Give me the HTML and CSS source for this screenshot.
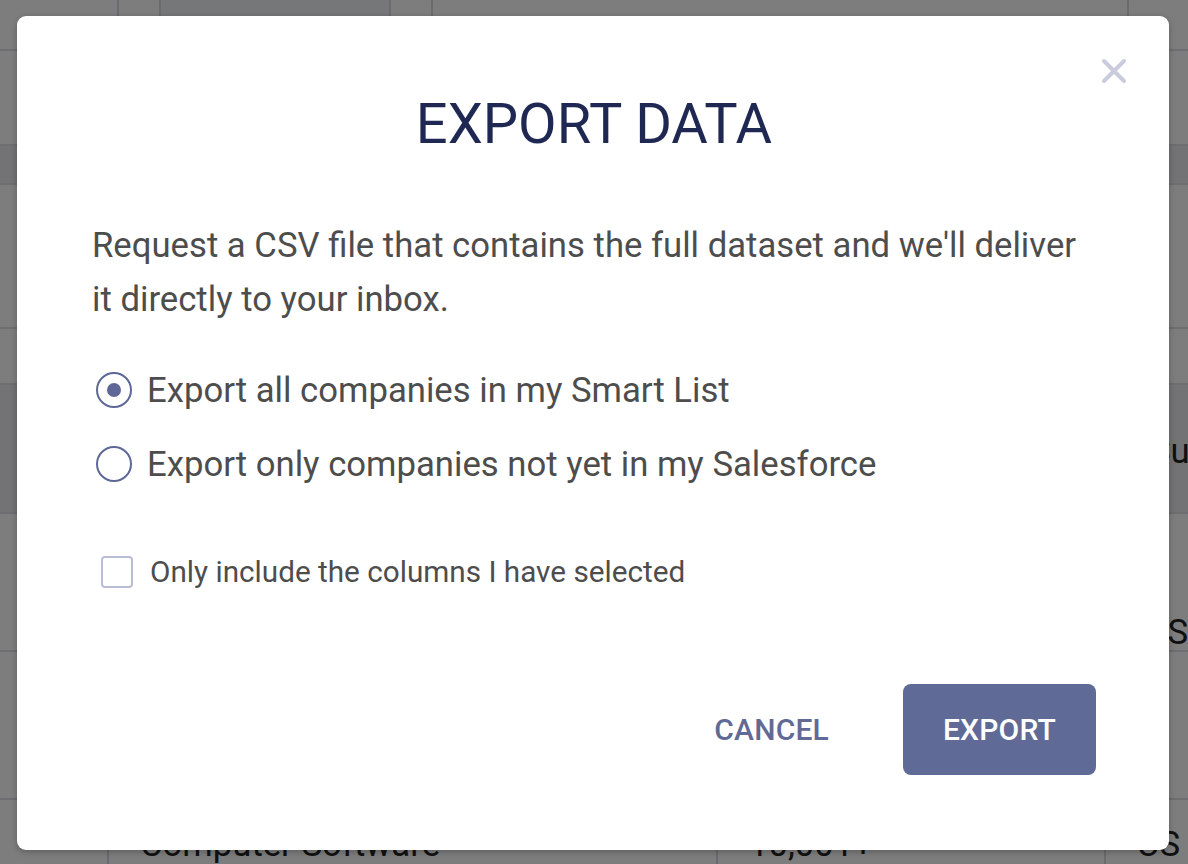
FILE: index.html
```html
<!DOCTYPE html>
<html lang="en">
<head>
<meta charset="utf-8">
<title>Export data</title>
<link rel="stylesheet" href="styles.css">
</head>
<body>
<div class="page">
  <div class="toolbar">
    <div class="tcell c1"></div>
    <div class="tcell c2"></div>
    <div class="tcell c3 dark"></div>
    <div class="tcell c4"></div>
    <div class="tcell c5"></div>
  </div>
  <div class="row r1"></div>
  <div class="row r2 shade"></div>
  <div class="row r3"></div>
  <div class="row r4"></div>
  <div class="row r5 shade"><span class="cut">Su</span></div>
  <div class="row r6"><span class="cut">US</span></div>
  <div class="row r7"></div>
  <div class="row last">
    <span class="cell a"></span>
    <span class="cell b">Computer Software</span>
    <span class="cell c">10,001+</span>
    <span class="cell d">US</span>
  </div>
</div>
<div class="overlay"></div>

<div class="modal" role="dialog">
  <button class="close" aria-label="Close">
    <svg width="26" height="26" viewBox="0 0 26 26"><path d="M3 3 L23 23 M23 3 L3 23" stroke="#c9ccdd" stroke-width="4" stroke-linecap="round"/></svg>
  </button>
  <h1 class="title">EXPORT DATA</h1>
  <p class="desc">Request a CSV file that contains the full dataset and we'll deliver it directly to your inbox.</p>
  <div class="options">
    <label class="radio"><span class="circle on"></span><span>Export all companies in my Smart List</span></label>
    <label class="radio"><span class="circle"></span><span>Export only companies not yet in my Salesforce</span></label>
  </div>
  <label class="check"><span class="box"></span><span>Only include the columns I have selected</span></label>
  <div class="actions">
    <button class="btn-cancel">CANCEL</button>
    <button class="btn-export">EXPORT</button>
  </div>
</div>
</body>
</html>
```

FILE: styles.css
```css
* { box-sizing: border-box; }
html, body { margin: 0; padding: 0; }
body {
  width: 1188px;
  height: 864px;
  overflow: hidden;
  font-family: Roboto, "Liberation Sans", Arial, sans-serif;
  background: #ffffff;
  position: relative;
}
.page {
  width: 1188px;
  height: 864px;
  display: flex;
  flex-direction: column;
  background: #fafafa;
}
.toolbar {
  height: 52px;
  display: flex;
  border-bottom: 2px solid #dcdde2;
}
.tcell { border-right: 2px solid #d6d7dc; }
.c1 { width: 119px; }
.c2 { width: 42px; }
.c3 { width: 230px; }
.c4 { width: 42px; }
.c5 { width: 696px; }
.dark { background: #eceef3; }
.row { border-bottom: 2px solid #dcdde2; position: relative; font-size: 34.7px; color: #222; }
.r1 { height: 96px; }
.r2 { height: 40px; }
.r3 { height: 145px; }
.r4 { height: 57px; }
.r5 { height: 131px; }
.r6 { height: 140px; }
.r7 { height: 150px; }
.shade { background: #e6e7ec; }
.cut { position: absolute; left: 1150px; }
.r5 .cut { top: 46px; }
.r6 .cut { top: 98px; left: 1145px; }
.last { flex: 1; display: flex; border-bottom: none; }
.cell { border-right: 2px solid #d6d7dc; padding-top: 24px; }
.cell.a { width: 109px; }
.cell.b { width: 609px; padding-left: 31px; }
.cell.c { width: 388px; padding-left: 31px; }
.cell.d { flex: 1; border-right: none; padding-left: 31px; }
.overlay {
  position: absolute;
  inset: 0;
  background: rgba(0, 0, 0, 0.5);
}
.modal {
  position: absolute;
  left: 17px;
  top: 16px;
  width: 1152px;
  height: 834px;
  background: #ffffff;
  border-radius: 9px;
  padding: 76px 73px 0 75px;
  display: flex;
  flex-direction: column;
  box-shadow: 0 2px 6px rgba(0,0,0,0.25);
}
.close {
  position: absolute;
  right: 42px;
  top: 42px;
  width: 26px;
  height: 26px;
  padding: 0;
  border: none;
  background: none;
}
.close svg { display: block; }
.title {
  margin: 0;
  text-align: center;
  font-size: 56px;
  line-height: 64px;
  font-weight: 400;
  color: #1e2852;
}
.desc {
  margin: 62px 0 0 0;
  font-size: 34.7px;
  line-height: 54px;
  color: #4d4d4d;
}
.options {
  margin-top: 41px;
  display: flex;
  flex-direction: column;
  gap: 28px;
}
.radio, .check {
  display: flex;
  align-items: center;
  color: #4d4d4d;
}
.radio { font-size: 34.7px; line-height: 46px; gap: 15px; padding-left: 4px; }
.circle {
  width: 36px;
  height: 36px;
  flex: none;
  border: 2px solid #5e6898;
  border-radius: 50%;
  display: flex;
  align-items: center;
  justify-content: center;
}
.circle.on::after {
  content: "";
  width: 14px;
  height: 14px;
  border-radius: 50%;
  background: #5e6898;
}
.check {
  margin-top: 65px;
  font-size: 29.7px;
  line-height: 40px;
  gap: 17px;
  padding-left: 9px;
}
.box {
  width: 32px;
  height: 32px;
  flex: none;
  border: 2px solid #b9bdd6;
  border-radius: 4px;
}
.actions {
  margin-top: 92px;
  display: flex;
  justify-content: flex-end;
  align-items: center;
  gap: 74px;
}
.btn-cancel {
  border: none;
  background: none;
  padding: 0;
  font-family: inherit;
  font-size: 30px;
  font-weight: 500;
  color: #5f6a96;
  letter-spacing: 0.2px;
}
.btn-export {
  width: 193px;
  height: 91px;
  border: none;
  border-radius: 8px;
  background: #5f6a96;
  color: #ffffff;
  font-family: inherit;
  font-size: 30px;
  font-weight: 500;
  letter-spacing: 0.2px;
}
```
